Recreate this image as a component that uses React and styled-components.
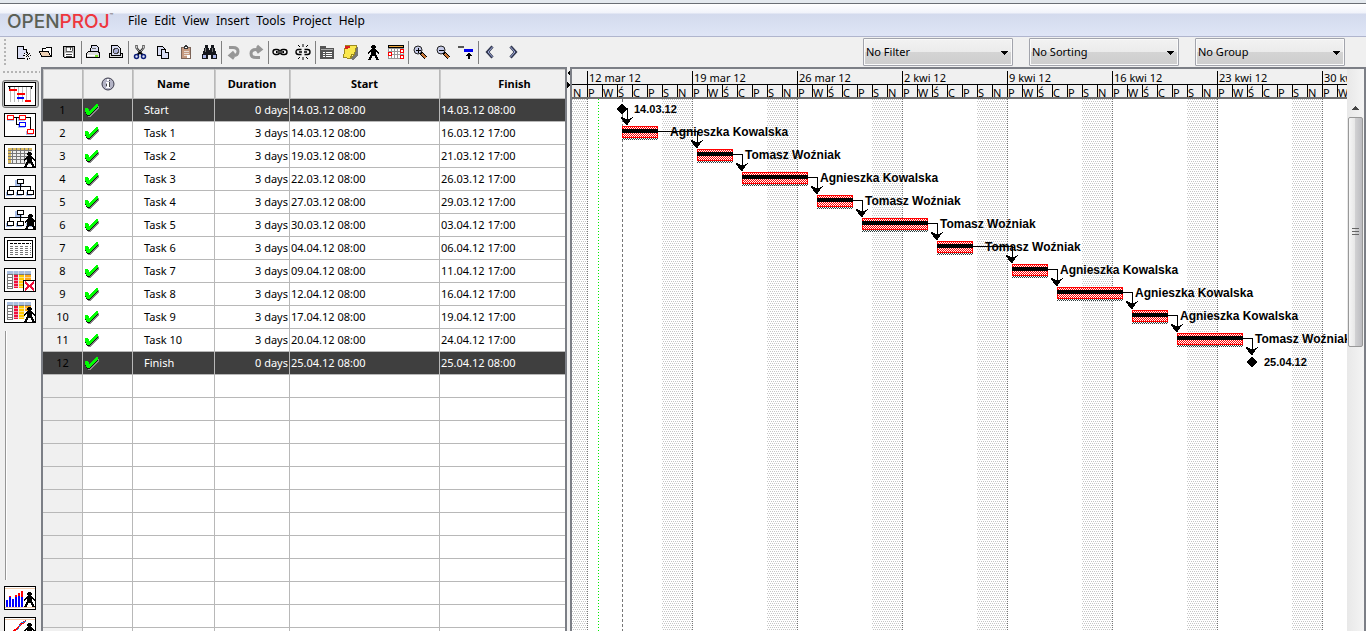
import React from 'react';
import styled, { createGlobalStyle, css } from 'styled-components';

const GlobalStyle = createGlobalStyle`
  * {
    box-sizing: border-box;
  }
  body {
    margin: 0;
    overflow: hidden;
    font-family: 'Noto Sans', 'Open Sans', sans-serif;
    font-size: 11px;
    line-height: 16px;
    color: #000;
    background: #f0f0f0;
  }
  svg {
    display: block;
    flex: none;
  }
`;

const Window = styled.div`
  display: flex;
  flex-direction: column;
  height: 100vh;
  border-top: 3px solid #e4e9ee;
`;

const MenuBar = styled.header`
  display: flex;
  align-items: center;
  flex: none;
  height: 34px;
  padding: 2px 0 0 7px;
  border-top: 1px solid #6a6e74;
  border-bottom: 1px solid #b0b5cd;
  background: linear-gradient(#fff 0, #f1f3fa 9px, #d3daed 10px, #dfe5f6 100%);
`;

const Logo = styled.div`
  display: flex;
  width: 118px;
  padding-top: 2px;
  font-family: Inter, sans-serif;
  font-size: 19px;
  font-weight: 500;
  line-height: 24px;
  color: #5b6055;

  b {
    font-weight: 500;
    color: #ee373d;
  }
  small {
    font-size: 6px;
    line-height: 12px;
  }
`;

const Menu = styled.nav`
  display: flex;
  gap: 1px;
`;

const MenuItem = styled.button`
  padding: 0 3px;
  border: 0;
  background: none;
  font: 12px/18px 'Noto Sans', sans-serif;
  color: #000;
`;

const Toolbar = styled.div`
  display: flex;
  align-items: center;
  flex: none;
  height: 30px;
  padding-right: 21px;
`;

const Grip = styled.div`
  flex: none;
  background-image: radial-gradient(circle, #b4b4b4 1px, transparent 1px);
  background-size: 4px 4px;
  ${({ $vertical }) =>
    $vertical
      ? css`
          width: 4px;
          height: 28px;
          margin: 0 5px 0 3px;
        `
      : css`
          width: 38px;
          height: 4px;
          margin: 3px 0 6px;
        `}
`;

const ToolGroup = styled.div`
  display: flex;
  align-items: center;
  height: 23px;
  border-right: 1px solid ${({ $last }) => ($last ? 'transparent' : '#808080')};
`;

const ToolButton = styled.button`
  display: flex;
  align-items: center;
  justify-content: center;
  width: 23px;
  height: 22px;
  padding: 0 2px 0 0;
  border: 0;
  background: none;
`;

const Filters = styled.div`
  display: flex;
  gap: 16px;
  margin-left: auto;
`;

const SelectBox = styled.label`
  position: relative;
  width: 150px;

  svg {
    position: absolute;
    top: 13px;
    right: 5px;
    pointer-events: none;
  }
`;

const Select = styled.select`
  appearance: none;
  width: 100%;
  height: 28px;
  padding: 0 2px;
  border: 1px solid #a2a4ac;
  border-radius: 1px;
  box-shadow: inset 0 0 0 1px #fafafa;
  background: linear-gradient(#f2f2f2 0, #ebebeb 50%, #d4d4d4 51%, #cdcdcd 100%);
  font: 11px/16px 'Noto Sans', sans-serif;
  color: #000;
`;

const Workspace = styled.div`
  display: flex;
  flex: 1;
  min-height: 0;
`;

const Sidebar = styled.aside`
  display: flex;
  flex-direction: column;
  flex: none;
  width: 41px;
  padding-left: 2px;
  overflow: hidden;
`;

const ViewButton = styled.button`
  display: flex;
  align-items: center;
  justify-content: center;
  flex: none;
  width: 37px;
  height: 28px;
  margin-bottom: 3px;
  padding: 0 2px 0 0;
  border: 1px solid transparent;
  border-radius: 3px;
  background: none;
  ${({ $active }) =>
    $active &&
    css`
      border-color: #777;
      background: linear-gradient(#c9c9c9, #f2f2f2);
      box-shadow: inset 0 0 1px 1px #bbb;
    `}
`;

const SidebarRule = styled.div`
  flex: none;
  width: 2px;
  height: 249px;
  margin: 3px 0 4px 3px;
  border-left: 1px solid #969696;
  background: #fff;
`;

const TablePane = styled.section`
  flex: none;
  width: 526px;
  overflow: hidden;
  border: 2px solid #7c7f86;
  border-bottom: 0;
`;

const TaskTable = styled.table`
  width: 547px;
  table-layout: fixed;
  border-collapse: separate;
  border-spacing: 0;
`;

const HeadCell = styled.th`
  height: 30px;
  padding: 0;
  border-right: 1px solid #b8b8b8;
  border-bottom: 1px solid #b8b8b8;
  box-shadow: inset 1px 1px 0 #c9c9c9;
  background: #f0f0f0;
  font-weight: 700;

  svg {
    margin: 0 auto;
  }
`;

const Row = styled.tr`
  color: ${({ $dark }) => ($dark ? '#fff' : '#000')};
  background: ${({ $dark }) => ($dark ? '#3f3f3f' : '#fff')};
`;

const Cell = styled.td`
  height: 23px;
  padding: 0 1px;
  padding-left: ${({ $indent }) => ($indent ? '11px' : '1px')};
  border-right: 1px solid #b8b8b8;
  border-bottom: 1px solid #b8b8b8;
  text-align: ${({ $align }) => $align || 'left'};
  white-space: nowrap;
`;

const NumberCell = styled(Cell)`
  color: #000;
  text-align: center;
  background: ${({ $dark }) => ($dark ? '#3f3f3f' : '#f0f0f0')};
`;

const Splitter = styled.div`
  display: flex;
  flex-direction: column;
  gap: 6px;
  flex: none;
  width: 3px;
  padding-top: 3px;
  background: #f4f4f4;
`;

const GanttPane = styled.section`
  display: flex;
  flex: 1;
  min-width: 0;
  border: 2px solid #7c7f86;
  border-bottom: 0;
`;

const GanttMain = styled.div`
  display: flex;
  flex-direction: column;
  flex: 1;
  min-width: 0;
  overflow: hidden;
`;

const TimeScale = styled.div`
  flex: none;
  height: 30px;
  border-bottom: 2px solid #6f6f6f;
  background: #f0f0f0;
`;

const Weeks = styled.div`
  display: flex;
  height: 16px;
  padding: 2px 0 0 15px;
  border-bottom: 1px solid #000;
`;

const Week = styled.div`
  flex: none;
  width: 105px;
  padding-left: 1px;
  border-left: 1px solid #000;
  line-height: 13px;
  white-space: nowrap;
`;

const Days = styled.div`
  display: flex;
  height: 12px;
`;

const Day = styled.div`
  flex: none;
  width: 15px;
  border-left: 1px solid #000;
  line-height: 15px;

  &:first-child {
    border-color: transparent;
  }
`;

const Chart = styled.svg`
  flex: 1;
  width: 100%;
  min-height: 0;
  background: #fff;
`;

const BarLabel = styled.text`
  font-family: 'Liberation Sans', Arial, sans-serif;
  font-size: ${({ $milestone }) => ($milestone ? '11px' : '12px')};
  font-weight: 700;
`;

const ScrollBar = styled.div`
  display: flex;
  flex-direction: column;
  flex: none;
  width: 17px;
  padding: 30px 1px 0;
  background: linear-gradient(90deg, #e8e8e8, #f4f4f4);
`;

const ScrollUp = styled.button`
  display: flex;
  align-items: center;
  justify-content: center;
  height: 18px;
  padding: 0;
  border: 0;
  background: none;
`;

const ScrollThumb = styled.div`
  display: flex;
  align-items: center;
  justify-content: center;
  height: 230px;
  border: 1px solid #989898;
  border-radius: 2px;
  background: linear-gradient(90deg, #f6f6f6 0, #e6e6e6 48%, #d0d0d2 50%, #bcbcc0 100%);
`;

const Icon = ({ w = 16, h = 16, children }) => (
  <svg width={w} height={h} viewBox={`0 0 ${w} ${h}`} shapeRendering="crispEdges" fill="none" aria-hidden="true">
    {children}
  </svg>
);

const Person = ({ x = 0, y = 0 }) => (
  <path
    transform={`translate(${x} ${y})`}
    fill="#000"
    d="M4 0h3v1h1v2h-1v1h1v1h1v1h1v1h1v2h-1v-1h-1v-1h-1v3h1v2h1v2h1v1h-3v-2h-1v-2h-3v2h-1v2h-3v-1h1v-2h1v-2h1v-3h-1v1h-1v1h-1v-2h1v-1h1v-1h1v-1h1v-1h-1v-2h1z"
  />
);

const Glass = ({ plus }) => (
  <>
    <circle cx="6" cy="6" r="4" fill="#c5cae8" stroke="#222" shapeRendering="auto" />
    <path d={plus ? 'M4 6.500h5M6.500 4v5' : 'M4 6.500h5'} stroke="#000" />
    <path d="M9 9l5 5" stroke="#000" strokeWidth="3" />
    <path d="M10 10l4 4" stroke="#c87838" strokeWidth="1.5" />
  </>
);

const toolIcons = {
  New: (
    <>
      <path d="M9.500 14.500h-7v-12h6l3 3v4" fill="#d8dcf2" stroke="#000" />
      <path d="M8.500 2.500v3h3" stroke="#000" fill="#fff" />
      <path d="M9 9h6v6h-6z" fill="#f0f0f0" />
      <path d="M12 8h1v2h-1zM12 14h1v2h-1zM8 12h2v-1h-2zM15 12h2v-1h-2zM9 9h1v1h-1zM14 9h1v1h-1zM9 14h1v1h-1zM14 14h1v1h-1zM11 10h1v1h-1zM13 10h1v1h-1zM11 12h1v1h-1zM13 12h1v1h-1zM12 11h1v1h-1z" fill="#000" />
    </>
  ),
  Open: (
    <>
      <path d="M4.500 6.500v-2h3l1-1h5v9h-10" fill="#fff" stroke="#000" />
      <path d="M1.500 7.500h9l2 5h-9z" fill="#ecd0b4" stroke="#000" />
    </>
  ),
  Save: (
    <>
      <path d="M2.500 2.500h11v11h-10l-1-1z" fill="#b8b8b8" stroke="#000" />
      <path d="M5 3h6v4h-6z" fill="#fff" stroke="#000" strokeWidth=".5" />
      <path d="M4 9h8v4h-8z" fill="#fff" />
      <path d="M5 10.500h6M5 12.500h6M9.500 3v3" stroke="#444" />
    </>
  ),
  Print: (
    <>
      <path d="M5.500 7.500l1-6h5l2 2v4z" fill="#d8dcf2" stroke="#000" />
      <path d="M3.500 7.500h10l1 2v4h-13v-4z" fill="#ddd" stroke="#000" />
      <path d="M2 11.500h8" stroke="#fff" />
      <path d="M10 11h3v2h-3z" fill="#7be02a" />
      <path d="M7 4.500h4" stroke="#777" />
    </>
  ),
  'Print preview': (
    <>
      <path d="M1.500 9.500h13v4h-13z" fill="#ddd" stroke="#000" />
      <path d="M3.500 11.500v-10h6l3 3v7z" fill="#d8dcf2" stroke="#000" />
      <circle cx="8" cy="7" r="2.5" fill="#aab0da" stroke="#444" />
    </>
  ),
  Cut: (
    <>
      <path d="M4.500 1v3l6 7M11.500 1v3l-6 7" stroke="#000" strokeWidth="2" shapeRendering="auto" />
      <path d="M4.500 1.500v2.500l3 3.500M11.500 1.500v2.500l-3 3.500" stroke="#fff" strokeWidth=".8" shapeRendering="auto" />
      <circle cx="4.5" cy="12.5" r="2" fill="#dfe3f8" stroke="#0c1e78" strokeWidth="1.5" shapeRendering="auto" />
      <circle cx="11.5" cy="12.5" r="2" fill="#dfe3f8" stroke="#0c1e78" strokeWidth="1.5" shapeRendering="auto" />
    </>
  ),
  Copy: (
    <>
      <path d="M2.500 2.500h5l3 3v6h-8z" fill="#d8dcf2" stroke="#000" />
      <path d="M6.500 5.500h4l3 3v6h-7z" fill="#d8dcf2" stroke="#000" />
      <path d="M10.500 5.500v3h3" fill="#fff" stroke="#000" />
    </>
  ),
  Paste: (
    <>
      <path d="M3.500 3.500h9v11h-9z" fill="#c69a80" stroke="#7c6458" />
      <path d="M6.500 4.500v-2h1v-1h1v1h1v2z" fill="#fff" stroke="#333" />
      <path d="M6 7.500h5M6 9.500h5M6 11.500h3" stroke="#e8dcd4" />
      <path d="M9 11h3v3h-3z" fill="#fff" />
    </>
  ),
  Find: (
    <>
      <path d="M4 1h3v3h1v2h1v-2h1v-3h3v3h1v3h1v3h1v5h-6v-4h-3v4h-6v-5h1v-3h1v-3h1z" fill="#14161c" />
      <path d="M2 11h3v3h-3zM12 11h3v3h-3z" fill="#aab4e6" />
      <path d="M4.500 4v4M11.500 4v4" stroke="#777" />
    </>
  ),
  Undo: <path d="M4 3.500h4q5 0 5 4t-5 4h-2M9 8l-4 3.500l4 3" stroke="#969696" strokeWidth="3" shapeRendering="auto" />,
  Redo: <path d="M12 13.500h-4q-5 0-5-4t5-4h4M9 2l4 3.500l-4 3" stroke="#969696" strokeWidth="3" shapeRendering="auto" />,
  Link: (
    <>
      <rect x="1" y="5.500" width="6.500" height="5" rx="2.5" stroke="#000" strokeWidth="1.4" shapeRendering="auto" />
      <rect x="8.500" y="5.500" width="6.500" height="5" rx="2.5" stroke="#000" strokeWidth="1.4" shapeRendering="auto" />
      <path d="M4 7h8v2h-8z" fill="#000" />
      <path d="M5 8h6" stroke="#fff" strokeWidth=".6" shapeRendering="auto" />
    </>
  ),
  Unlink: (
    <g stroke="#000" shapeRendering="auto">
      <path d="M6.500 5.500h-3q-2.500 0-2.500 2.500t2.500 2.500h3M9.500 5.500h3q2.500 0 2.500 2.500t-2.500 2.500h-3M4 8h3M9 8h3" strokeWidth="1.4" />
      <path d="M8 0v3M3 1l2 2M13 1l-2 2M8 16v-3M3 15l2-2M13 15l-2-2" />
    </g>
  ),
  Information: (
    <>
      <path d="M1 2h6v2h8v11h-14z" fill="#555" />
      <path d="M2 5.500h12" stroke="#aaa" />
      <path d="M4 8.500h2M7 8.500h6M4 10.500h2M7 10.500h6M4 12.500h2M7 12.500h6" stroke="#fff" />
    </>
  ),
  Notes: (
    <>
      <path d="M3 14l9 2l4-5v-8z" fill="#777" />
      <path d="M3.500 1.500h11l-2 9l-4 4l-7-1z" fill="#fbe84e" stroke="#9b8a20" />
      <path d="M12.500 10.500l-3 0l-1 4z" fill="#fff8a0" stroke="#9b8a20" />
      <path d="M3 2h5v2h-2v1h-3z" fill="#d8201c" />
    </>
  ),
  'Assign resources': <Person x={3} y={1} />,
  Calendar: (
    <>
      <path d="M0 1h16v14h-16z" fill="#fff" />
      <path d="M0 4.500h16M0 7.500h16M0 10.500h16M0 14.500h16M.5 1v14M3.500 4v11M6.500 4v11M9.500 4v11M12.500 4v11M15.500 1v14" stroke="#999" />
      <path d="M0 1h16v3h-16z" fill="#000" />
      <path d="M1 2.500h14" stroke="#f0a83c" />
      <path d="M12.500 5.500h3v3h-3zM.5 8.500h3v3h-3zM12.500 11.500h3v3h-3z" fill="#fff" stroke="#f00" />
    </>
  ),
  'Zoom in': <Glass plus />,
  'Zoom out': <Glass />,
  'Scroll to task': (
    <>
      <path d="M.5 2.500h5v1h-5z" stroke="#555" fill="#ddd" />
      <path d="M6 5h9v3h-9z" fill="#0000f0" />
      <path d="M10 9h2v1h1v1h1v1h-2v3h-2v-3h-2v-1h1v-1h1z" fill="#000" />
    </>
  ),
  Previous: (
    <>
      <path d="M10.500 2.500l-5 5.500l5 5.500" stroke="#30364e" strokeWidth="3" shapeRendering="auto" />
      <path d="M10.500 3l-4.500 5l4.500 5" stroke="#a3aee0" shapeRendering="auto" />
    </>
  ),
  Next: (
    <>
      <path d="M5.500 2.500l5 5.500l-5 5.500" stroke="#30364e" strokeWidth="3" shapeRendering="auto" />
      <path d="M5.500 3l4.500 5l-4.500 5" stroke="#a3aee0" shapeRendering="auto" />
    </>
  ),
};

const toolGroups = [
  ['New', 'Open', 'Save'],
  ['Print', 'Print preview'],
  ['Cut', 'Copy', 'Paste', 'Find'],
  ['Undo', 'Redo'],
  ['Link', 'Unlink'],
  ['Information', 'Notes', 'Assign resources', 'Calendar'],
  ['Zoom in', 'Zoom out', 'Scroll to task'],
  ['Previous', 'Next'],
];

const Sheet = () => (
  <>
    <path d="M3 3h24v3h-24z" fill="#a9bfe0" />
    <path d="M3.500 6.500h5v14h-5z" fill="#fff" stroke="#777" />
    <path d="M10 7h4v13h-4z" fill="#f0103c" />
    <path d="M15 7h5v13h-5z" fill="#ffc800" />
    <path d="M21 7h6v5h-6z" fill="#ffa818" />
    <path d="M3 6.500h24" stroke="#777" />
    <path d="M9 9.500h18M9 12.500h18M9 15.500h12M9 18.500h12M9.500 3v17M14.500 3v17M20.500 3v17" stroke="#eee" strokeWidth=".6" shapeRendering="auto" />
    <path d="M3 9.500h6M3 12.500h6M3 15.500h6M3 18.500h6" stroke="#777" />
  </>
);

const Tree = () => (
  <>
    <path d="M11 5h7v6h-7zM2 17h6v4h-6zM12 17h6v4h-6zM22 17h6v4h-6z" fill="#a9bfea" />
    <path d="M16.500 9v5M5.500 16v-4.500h21v4.500M16.500 11v5" stroke="#000" />
    <path d="M13.500 4.500h6v4h-6zM3.500 15.500h6v4h-6zM13.500 15.500h6v4h-6zM23.500 15.500h6v4h-6z" fill="#fff" stroke="#000" />
  </>
);

const viewIcons = {
  Gantt: (
    <>
      <path d="M6.500 4v16M10.500 4v16M14.500 4v16M18.500 4v16M22.500 4v16M26.500 4v16" stroke="#bbb" />
      <path d="M4 4h25v1h-1v2h-1v-2h-21v2h-1v-2h-1z" fill="#000" />
      <path d="M5 7h8v2h-8zM13 11h8v2h-8zM21 18h6v2h-6z" fill="#f00" />
      <path d="M13 15h7v2h-7z" fill="#00f" />
    </>
  ),
  Network: (
    <>
      <path d="M3 4h7v4h-7zM14 4h7v4h-7zM14 11h7v4h-7zM22 18h7v4h-7z" fill="#a9bfea" />
      <path d="M9 4.500h6M21 4.500h5.500v12M12.500 5v6.500h3" stroke="#000" />
      <path d="M3.500 2.500h6v4h-6zM15.500 2.500h6v4h-6zM23.500 16.500h6v4h-6z" fill="#fff" stroke="#f00" />
      <path d="M15.500 9.500h6v4h-6z" fill="#fff" stroke="#00f" />
    </>
  ),
  Resources: (
    <>
      <path d="M4 4h24v16h-24z" fill="#eee" />
      <path d="M4 4h24v2h-24zM4 4h3v15h-3z" fill="#d8b85c" />
      <path d="M4 6.500h24M4 9.500h24M4 12.500h24M4 15.500h24M4 19.500h24M8.500 4v16M12.500 4v16M16.500 4v16M20.500 4v16M24.500 4v16" stroke="#777" />
      <Person x={20} y={8} />
    </>
  ),
  WBS: <Tree />,
  RBS: (
    <>
      <Tree />
      <Person x={21} y={8} />
    </>
  ),
  Report: (
    <>
      <path d="M3.500 3.500h25v17h-25z" fill="#fff" stroke="#000" />
      <path d="M6 6.500h21" stroke="#000" strokeDasharray="3 1" />
      <path d="M6 9.500h21M6 11.500h21M6 13.500h21M6 15.500h21M6 17.500h21" stroke="#777" strokeDasharray="3 2" />
    </>
  ),
  'Task usage': (
    <>
      <Sheet />
      <path d="M19.500 12.500h12v11h-12z" fill="#fff" stroke="#000" />
      <path d="M21 14l9 8M30 14l-9 8" stroke="#f0103c" strokeWidth="2" />
    </>
  ),
  'Resource usage': (
    <>
      <Sheet />
      <Person x={20} y={8} />
    </>
  ),
};

const bottomIcons = {
  Histogram: (
    <>
      <path d="M1 2.500h30M1 21.500h30" stroke="#f0cdb0" />
      <path d="M2 14h2v7h-2zM5 11h2v10h-2zM8 13h2v8h-2zM11 11h2v10h-2zM14 10h2v11h-2zM17 11h2v10h-2z" fill="#00f" />
      <path d="M5 10h2v1h-2zM11 9h2v2h-2zM14 7h2v3h-2zM17 5h2v6h-2z" fill="#f00" />
      <Person x={20} y={6} />
    </>
  ),
  Charts: (
    <>
      <path d="M1 2.500h30" stroke="#f0cdb0" />
      <path d="M8 15l5-3l4-5l5-3" stroke="#f00" strokeWidth="2" />
      <path d="M10 16l4-4l3-6l5-2" stroke="#1880e8" strokeDasharray="3 1" />
      <Person x={20} y={6} />
    </>
  ),
};

const ViewIcon = ({ children }) => (
  <Icon w={32} h={24}>
    <path d="M.5.5h31v23h-31z" fill="#fff" />
    {children}
    <path d="M.5.5h31v23h-31z" stroke="#000" />
  </Icon>
);

const checkPath = 'M1 6h3v1h1v2h1l6-7h2v2l-7 7l-1 2h-3v-1h-1v-2h-1z';

const CheckMark = () => (
  <Icon w={16} h={16}>
    <path d={checkPath} fill="#8a8a8a" transform="translate(1 2)" />
    <path d={checkPath} fill="#111" transform="translate(0 1)" />
    <path d={checkPath} fill="#0f0" />
  </Icon>
);

// from and to are [day, hour] counted from Sunday 11 March
const tasks = [
  { name: 'Start', days: 0, start: '14.03.12 08:00', finish: '14.03.12 08:00', from: [3, 8], label: '14.03.12' },
  { name: 'Task 1', days: 3, start: '14.03.12 08:00', finish: '16.03.12 17:00', from: [3, 8], to: [5, 17], label: 'Agnieszka Kowalska' },
  { name: 'Task 2', days: 3, start: '19.03.12 08:00', finish: '21.03.12 17:00', from: [8, 8], to: [10, 17], label: 'Tomasz Woźniak' },
  { name: 'Task 3', days: 3, start: '22.03.12 08:00', finish: '26.03.12 17:00', from: [11, 8], to: [15, 17], label: 'Agnieszka Kowalska' },
  { name: 'Task 4', days: 3, start: '27.03.12 08:00', finish: '29.03.12 17:00', from: [16, 8], to: [18, 17], label: 'Tomasz Woźniak' },
  { name: 'Task 5', days: 3, start: '30.03.12 08:00', finish: '03.04.12 17:00', from: [19, 8], to: [23, 17], label: 'Tomasz Woźniak' },
  { name: 'Task 6', days: 3, start: '04.04.12 08:00', finish: '06.04.12 17:00', from: [24, 8], to: [26, 17], label: 'Tomasz Woźniak' },
  { name: 'Task 7', days: 3, start: '09.04.12 08:00', finish: '11.04.12 17:00', from: [29, 8], to: [31, 17], label: 'Agnieszka Kowalska' },
  { name: 'Task 8', days: 3, start: '12.04.12 08:00', finish: '16.04.12 17:00', from: [32, 8], to: [36, 17], label: 'Agnieszka Kowalska' },
  { name: 'Task 9', days: 3, start: '17.04.12 08:00', finish: '19.04.12 17:00', from: [37, 8], to: [39, 17], label: 'Agnieszka Kowalska' },
  { name: 'Task 10', days: 3, start: '20.04.12 08:00', finish: '24.04.12 17:00', from: [40, 8], to: [44, 17], label: 'Tomasz Woźniak' },
  { name: 'Finish', days: 0, start: '25.04.12 08:00', finish: '25.04.12 08:00', from: [45, 8], label: '25.04.12' },
];

const weeks = ['12 mar 12', '19 mar 12', '26 mar 12', '2 kwi 12', '9 kwi 12', '16 kwi 12', '23 kwi 12', '30 kwi 12'];
const dayLetters = ['N', 'P', 'W', 'Ś', 'C', 'P', 'S'];
const columnWidths = [40, 50, 82, 75, 150, 150];
const blankRows = Array.from({ length: 12 });

const DAY = 15;
const ROW = 23;
const toX = ([day, hour]) => day * DAY + Math.round((hour * DAY) / 24);

const GanttChart = () => (
  <Chart role="img" aria-label="Gantt chart" shapeRendering="crispEdges">
    <defs>
      <pattern id="weekend" width="4" height="4" patternUnits="userSpaceOnUse">
        <path d="M0 0h1v1h-1zM2 0h1v1h-1zM1 2h1v1h-1zM3 2h1v1h-1z" fill="#c6c6c6" />
      </pattern>
      <pattern id="bar" width="2" height="2" patternUnits="userSpaceOnUse">
        <path d="M0 0h1v1h-1zM1 1h1v1h-1z" fill="#f00" />
      </pattern>
      <pattern id="baseline" width="2" height="2" patternUnits="userSpaceOnUse">
        <path d="M0 0h1v1h-1zM1 1h1v1h-1z" fill="#2c3c3c" />
      </pattern>
    </defs>
    <rect width={DAY} height="100%" fill="url(#weekend)" />
    {weeks.map((week, i) => (
      <React.Fragment key={week}>
        <rect x={i * 105 + 90} width={30} height="100%" fill="url(#weekend)" />
        <line x1={i * 105 + 15.5} x2={i * 105 + 15.5} y2="100%" stroke="#777" strokeDasharray="1 1" />
      </React.Fragment>
    ))}
    <line x1="26.5" x2="26.5" y2="100%" stroke="#0e0" strokeDasharray="1 2" />
    <line x1="50.5" x2="50.5" y2="100%" stroke="#777" strokeDasharray="3 2" />
    {tasks.map((task, i) => {
      const x = toX(task.from);
      const end = task.to ? toX(task.to) : x;
      const y = i * ROW;
      const next = tasks[i + 1];
      const linkX = next && (i === 0 ? x + 5 : toX(next.from));
      return (
        <g key={task.name}>
          {task.to ? (
            <>
              <rect x={x} y={y + 4} width={end - x} height={12} fill="#fff" />
              <rect x={x} y={y + 4} width={end - x} height={12} fill="url(#bar)" />
              <rect x={x + 0.5} y={y + 4.5} width={end - x - 1} height={11} fill="none" stroke="#f00" />
              <rect x={x} y={y + 7} width={end - x} height={4} fill="#000" />
              <rect x={x} y={y + 16} width={end - x} height={2} fill="url(#baseline)" />
            </>
          ) : (
            <path d={`M${x - 1} ${y + 5}h1l5 5l-5 5h-1l-4-5z`} fill="#000" />
          )}
          <BarLabel x={end + 12} y={y + 14} $milestone={!task.to} shapeRendering="auto">
            {task.label}
          </BarLabel>
          {next && (
            <>
              <path d={`M${end} ${y + 9.5}H${linkX + 0.5}V${y + ROW + 3}`} fill="none" stroke="#000" />
              <path
                d={`M${linkX - 5} ${y + ROW - 5}h1v1h2v1h5v-1h2v-1h1v1h-1v1h-1v1h-1v2h-1v1h-1v1h-1v1h-1v-1h-1v-1h-1v-1h-1v-2h-1v-1h-1v-1h-1z`}
                fill="#000"
              />
            </>
          )}
        </g>
      );
    })}
  </Chart>
);

const Filter = ({ label, text }) => (
  <SelectBox>
    <Select aria-label={label}>
      <option>{text}</option>
    </Select>
    <Icon w={8} h={4}>
      <path d="M0 0h8l-4 4z" fill="#000" />
    </Icon>
  </SelectBox>
);

const TaskSheet = () => (
  <TablePane>
    <TaskTable>
      <colgroup>
        {columnWidths.map((width, i) => (
          <col key={i} width={width} />
        ))}
      </colgroup>
      <thead>
        <tr>
          <HeadCell aria-label="Row" />
          <HeadCell aria-label="Indicators">
            <Icon w={14} h={14}>
              <circle cx="7" cy="7" r="6" fill="#b4b4c6" stroke="#3c3c4c" shapeRendering="auto" />
              <path d="M5 5h3v5h1v1h-4v-1h1v-4h-1zM6 2h2v2h-2z" fill="#fff" />
              <path d="M8.500 3v1M8.500 5v5M5.500 7v2" stroke="#444" />
            </Icon>
          </HeadCell>
          <HeadCell>Name</HeadCell>
          <HeadCell>Duration</HeadCell>
          <HeadCell>Start</HeadCell>
          <HeadCell>Finish</HeadCell>
        </tr>
      </thead>
      <tbody>
        {tasks.map((task, i) => (
          <Row key={task.name} $dark={task.days === 0}>
            <NumberCell $dark={task.days === 0}>{i + 1}</NumberCell>
            <Cell>
              <CheckMark />
            </Cell>
            <Cell $indent>{task.name}</Cell>
            <Cell $align="right">{task.days} days</Cell>
            <Cell>{task.start}</Cell>
            <Cell>{task.finish}</Cell>
          </Row>
        ))}
        {blankRows.map((_, i) => (
          <Row key={i}>
            <NumberCell />
            <Cell />
            <Cell />
            <Cell />
            <Cell />
            <Cell />
          </Row>
        ))}
      </tbody>
    </TaskTable>
  </TablePane>
);

const App = () => (
  <Window>
    <GlobalStyle />
    <MenuBar>
      <Logo>
        OPEN<b>PROJ</b>
        <small>™</small>
      </Logo>
      <Menu>
        {['File', 'Edit', 'View', 'Insert', 'Tools', 'Project', 'Help'].map((item) => (
          <MenuItem key={item}>{item}</MenuItem>
        ))}
      </Menu>
    </MenuBar>
    <Toolbar>
      <Grip $vertical />
      {toolGroups.map((group, i) => (
        <ToolGroup key={group[0]} $last={i === toolGroups.length - 1}>
          {group.map((tool) => (
            <ToolButton key={tool} aria-label={tool}>
              <Icon>{toolIcons[tool]}</Icon>
            </ToolButton>
          ))}
        </ToolGroup>
      ))}
      <Filters>
        <Filter label="Filter" text="No Filter" />
        <Filter label="Sorting" text="No Sorting" />
        <Filter label="Group" text="No Group" />
      </Filters>
    </Toolbar>
    <Workspace>
      <Sidebar>
        <Grip />
        {Object.keys(viewIcons).map((view, i) => (
          <ViewButton key={view} aria-label={view} $active={i === 0}>
            <ViewIcon>{viewIcons[view]}</ViewIcon>
          </ViewButton>
        ))}
        <SidebarRule />
        {Object.keys(bottomIcons).map((view) => (
          <ViewButton key={view} aria-label={view}>
            <ViewIcon>{bottomIcons[view]}</ViewIcon>
          </ViewButton>
        ))}
      </Sidebar>
      <TaskSheet />
      <Splitter>
        <Icon w={3} h={6}>
          <path d="M3 0v6l-3-3z" fill="#000" />
        </Icon>
        <Icon w={3} h={6}>
          <path d="M0 0v6l3-3z" fill="#000" />
        </Icon>
      </Splitter>
      <GanttPane>
        <GanttMain>
          <TimeScale>
            <Weeks>
              {weeks.map((week) => (
                <Week key={week}>{week}</Week>
              ))}
            </Weeks>
            <Days>
              {Array.from({ length: 52 }, (_, i) => (
                <Day key={i}>{dayLetters[i % 7]}</Day>
              ))}
            </Days>
          </TimeScale>
          <GanttChart />
        </GanttMain>
        <ScrollBar>
          <ScrollUp aria-label="Scroll up">
            <Icon w={7} h={4}>
              <path d="M3 0h1l3 4h-7z" fill="#444" />
            </Icon>
          </ScrollUp>
          <ScrollThumb>
            <Icon w={8} h={8}>
              <path d="M0 .5h7M0 3.500h7M0 6.500h7" stroke="#666" />
            </Icon>
          </ScrollThumb>
        </ScrollBar>
      </GanttPane>
    </Workspace>
  </Window>
);

export default App;
